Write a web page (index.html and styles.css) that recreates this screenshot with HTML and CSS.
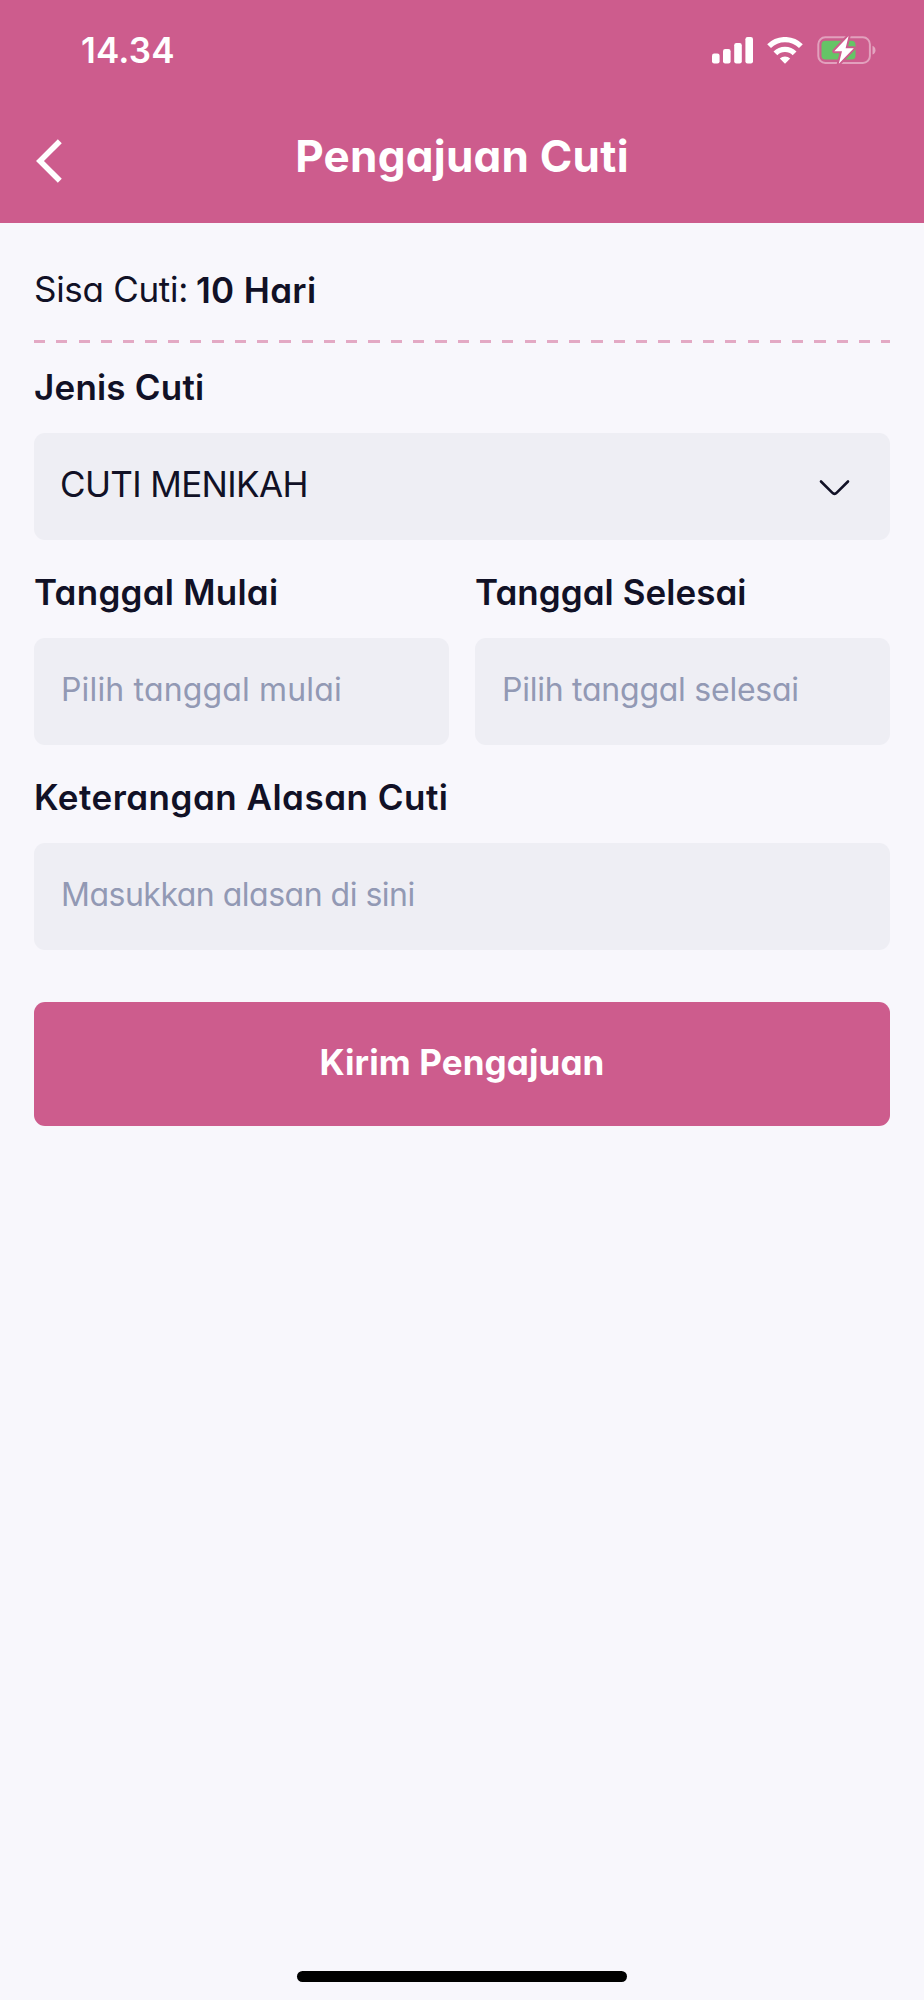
FILE: index.html
```html
<!DOCTYPE html>
<html lang="id">
<head>
<meta charset="utf-8">
<title>Pengajuan Cuti</title>
<link rel="stylesheet" href="styles.css">
</head>
<body>
<div class="screen">
  <header class="header">
    <div class="status-bar">
      <span class="clock">14.34</span>
      <div class="status-icons">
        <svg class="signal" width="42" height="27" viewBox="0 0 42 27" fill="#fff" aria-hidden="true">
          <rect x="0" y="16.5" width="7.6" height="10" rx="2.2"/>
          <rect x="11" y="12" width="7.6" height="14.5" rx="2.2"/>
          <rect x="22.2" y="6" width="7.6" height="20.5" rx="2.2"/>
          <rect x="33.4" y="0" width="7.6" height="26.5" rx="2.2"/>
        </svg>
        <svg class="wifi" width="36" height="27" viewBox="0 0 36 27" fill="none" stroke="#fff" stroke-width="5.4" aria-hidden="true">
          <path d="M2.1 9.2a22.6 22.6 0 0 1 31.8 0"/>
          <path d="M8.4 16.300a13.6 13.6 0 0 1 19.2 0"/>
          <path d="M18 26.8l-5.200-5.2a7.4 7.400 0 0 1 10.400 0z" fill="#fff" stroke="none"/>
        </svg>
        <svg class="battery" width="60" height="30" viewBox="0 0 60 30" aria-hidden="true">
          <rect x="1.3" y="2.3" width="51.6" height="25.6" rx="7" fill="none" stroke="#fff" stroke-opacity=".42" stroke-width="2"/>
          <path d="M55.5 10.8c1.9.7 3 2.4 3 4.4s-1.1 3.7-3 4.4z" fill="#fff" fill-opacity=".45"/>
          <rect x="4.5" y="5.7" width="34" height="18.8" rx="4" fill="#65c466"/>
          <path d="M31.6 1L17.3 16.2H25l-3.2 12.5L36.8 13.2H28.6z" fill="#fff" stroke="#cd5c8d" stroke-width="4" stroke-linejoin="round" paint-order="stroke"/>
        </svg>
      </div>
    </div>
    <div class="title-bar">
      <svg class="back" width="28" height="46" viewBox="0 0 28 46" fill="none" stroke="#fff" stroke-width="5.6" aria-label="Kembali">
        <path d="M25.8 2.3L6 22L25.8 41.7"/>
      </svg>
      <h1 class="title">Pengajuan Cuti</h1>
    </div>
  </header>

  <main class="content">
    <p class="balance"><span class="balance-label">Sisa Cuti:</span><strong class="balance-value">10 Hari</strong></p>
    <div class="divider"></div>

    <form class="form">
      <div class="group">
        <label class="label label-type">Jenis Cuti</label>
        <div class="field select">
          <span class="select-value">CUTI MENIKAH</span>
          <svg width="32" height="18" viewBox="0 0 32 18" fill="none" stroke="#111126" stroke-width="2.6" stroke-linecap="round" stroke-linejoin="round" aria-hidden="true">
            <path d="M2 2.5L13.2 13.7Q15.5 16 17.8 13.7L29 2.5"/>
          </svg>
        </div>
      </div>
      <div class="row">
        <div class="group">
          <label class="label label-start">Tanggal Mulai</label>
          <div class="field"><span class="placeholder placeholder-start">Pilih tanggal mulai</span></div>
        </div>
        <div class="group">
          <label class="label label-end">Tanggal Selesai</label>
          <div class="field"><span class="placeholder placeholder-end">Pilih tanggal selesai</span></div>
        </div>
      </div>
      <div class="group">
        <label class="label label-reason">Keterangan Alasan Cuti</label>
        <div class="field"><span class="placeholder placeholder-reason">Masukkan alasan di sini</span></div>
      </div>
      <button class="submit" type="button">Kirim Pengajuan</button>
    </form>
  </main>

  <div class="home-indicator"></div>
</div>
</body>
</html>
```
FILE: styles.css
```css
* { box-sizing: border-box; }

body {
  margin: 0;
  background: #f8f7fc;
  color: #111126;
  font-family: Inter, "Liberation Sans", sans-serif;
  font-feature-settings: "cv11";
}

.screen {
  display: flex;
  flex-direction: column;
  height: 2000px;
}

.header {
  height: 223px;
  background: #cd5c8d;
  color: #fff;
}

.status-bar {
  display: flex;
  justify-content: space-between;
  align-items: flex-start;
  padding: 28px 47px 0 81px;
}

.clock {
  font-size: 35px;
  font-weight: 600;
  line-height: 44px;
  letter-spacing: .2px;
}

.status-icons {
  display: flex;
  align-items: flex-start;
  padding-top: 9px;
}

.wifi { margin-left: 13px; }
.battery { margin: -2px 0 0 14px; }

.title-bar {
  display: grid;
  grid-template-columns: 60px 1fr 60px;
  align-items: start;
  padding: 57px 34px 0;
}

.back { margin-top: 10px; }

.title {
  margin: 0;
  font-size: 44px;
  font-weight: 700;
  line-height: 54px;
  letter-spacing: .25px;
  text-align: center;
  white-space: nowrap;
}

.content { padding: 44px 34px 0; }

.balance {
  display: flex;
  gap: 8px;
  margin: 0;
  font-size: 35px;
  line-height: 44px;
}

.balance-label { letter-spacing: -.3px; }

.balance-value {
  padding-top: 1px;
  margin-bottom: -1px;
  font-weight: 600;
  letter-spacing: .35px;
}

.divider {
  height: 3px;
  margin: 29px 0 22px;
  background: repeating-linear-gradient(90deg, #e3a9c4 0 11.2px, transparent 11.2px 22.3px);
}

.form {
  display: flex;
  flex-direction: column;
  gap: 30px;
}

.group {
  display: flex;
  flex-direction: column;
  gap: 24.4px;
}

.row {
  display: grid;
  grid-template-columns: 1fr 1fr;
  gap: 26px;
}

.label {
  font-size: 35px;
  font-weight: 600;
  line-height: 44px;
}

.label-type { letter-spacing: .2px; }
.label-start { letter-spacing: .25px; }
.label-end { letter-spacing: .05px; }
.label-reason { letter-spacing: .5px; }

.field {
  display: flex;
  align-items: center;
  height: 106.6px;
  padding: 0 26px 4px 27px;
  border-radius: 11px;
  background: #eeeef4;
}

.select {
  justify-content: space-between;
  padding: 0 39px 6px 26px;
}

.select svg { margin-top: 9px; }

.select-value {
  font-size: 35px;
  letter-spacing: -.65px;
}

.placeholder {
  color: #9299b4;
  font-size: 32px;
}

.placeholder-start { letter-spacing: .16px; }
.placeholder-end { letter-spacing: -.25px; }
.placeholder-reason { letter-spacing: -.5px; }

.submit {
  height: 124px;
  margin-top: 22.5px;
  padding: 0 0 5px;
  border: 0;
  border-radius: 11px;
  background: #cd5c8d;
  color: #fff;
  font: 700 35px Inter, "Liberation Sans", sans-serif;
  font-feature-settings: "cv11";
  letter-spacing: .1px;
}

.home-indicator {
  width: 330px;
  height: 11px;
  margin: auto auto 18px;
  border-radius: 6px;
  background: #000;
}
```
